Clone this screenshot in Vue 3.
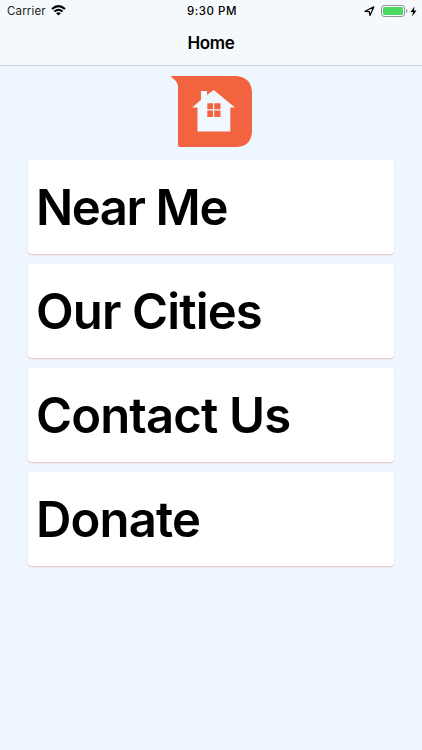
<script setup>
const items = [
  { label: 'Near Me', id: 'near' },
  { label: 'Our Cities', id: 'cities' },
  { label: 'Contact Us', id: 'contact' },
  { label: 'Donate', id: 'donate' },
]
</script>

<template>
  <div class="screen">
    <header class="header">
      <div class="status">
        <div class="left">
          <span class="carrier">Carrier</span>
          <svg class="wifi" width="15" height="11" viewBox="0 0 15 11">
            <g fill="none" stroke="#000" stroke-width="2">
              <path d="M1 4.1Q7.5 -1.9 14 4.1" />
              <path d="M3.4 6.6Q7.5 2.9 11.6 6.6" />
            </g>
            <path d="M5.1 8.2Q7.5 6.2 9.9 8.2L7.5 10.6Z" />
          </svg>
        </div>
        <span class="time">9:30 PM</span>
        <div class="right">
          <svg width="11" height="11" viewBox="0 0 11 11">
            <path d="M1 5.3L9.8 .9L5.9 9.5L5.3 5.7Z" fill="none" stroke="#000" stroke-width="1.2" stroke-linejoin="round" />
          </svg>
          <svg class="battery" width="27" height="12" viewBox="0 0 27 12">
            <rect x=".5" y=".5" width="23" height="11" rx="2.6" fill="#fff" stroke="#939598" />
            <rect x="2" y="2" width="20" height="8" rx="1.2" fill="#4cd964" />
            <path d="M25 4Q26.5 4.5 26.5 6T25 8Z" fill="#939598" />
          </svg>
          <svg class="bolt" width="7" height="11" viewBox="0 0 7 11">
            <path d="M4.6 .4L.5 6H3L2.1 10.4L6.5 4.5H3.9Z" />
          </svg>
        </div>
      </div>
      <h1 class="title">Home</h1>
    </header>
    <svg class="logo" width="84" height="74" viewBox="0 0 84 74">
      <path d="M2 1H66Q81 2 82 17V57Q81 71 67 72H10Q8 72 8 70V10Q6 5 1.3 2Q1 1 2 1Z" fill="#f26440" />
      <path d="M22.2 32.5L31 24.8V16H37V20L43.7 15L65 32.5H60.3V56.5H27.5V32.5Z" fill="#f0f7ff" />
      <path d="M37.3 28.2H43V34.2H37.3ZM44.2 28.2H50.5V34.2H44.2ZM37.3 35.5H43V42H37.3ZM44.2 35.5H50.5V42H44.2Z" fill="#f26440" />
    </svg>
    <nav class="menu">
      <div v-for="item in items" :key="item.id" class="card">
        <span class="label" :class="item.id">{{ item.label }}</span>
      </div>
    </nav>
  </div>
</template>

<style>
body {
  margin: 0;
}
</style>

<style scoped>
.screen {
  box-sizing: border-box;
  height: 750px;
  background: #eef7ff;
  font-family: Inter, "Liberation Sans", sans-serif;
  color: #000;
  display: flex;
  flex-direction: column;
  align-items: center;
}
.header {
  box-sizing: border-box;
  width: 100%;
  height: 66px;
  flex: none;
  background: #f6f9fb;
  border-bottom: 1px solid #cbd2d8;
}
.status {
  height: 22px;
  display: grid;
  grid-template-columns: 1fr auto 1fr;
  align-items: center;
  padding: 0 5px 0 7px;
  font-size: 11.5px;
  line-height: 22px;
}
.left,
.right {
  display: flex;
  align-items: center;
}
.left {
  gap: 5px;
}
.wifi {
  margin-top: -1px;
}
.carrier {
  color: #222;
  letter-spacing: 0.15px;
}
.right {
  justify-content: flex-end;
}
.battery {
  margin-left: 6px;
}
.bolt {
  margin-left: 2px;
}
.time {
  font-weight: 500;
  letter-spacing: 0.5px;
}
.title {
  margin: 0;
  text-align: center;
  font-size: 17px;
  font-weight: 600;
  line-height: 43px;
  letter-spacing: -0.4px;
}
.logo {
  margin-top: 9px;
  margin-left: 2px;
  flex: none;
}
.menu {
  width: 366px;
  margin-top: 11px;
  display: flex;
  flex-direction: column;
  gap: 10px;
}
.card {
  box-sizing: border-box;
  height: 94px;
  padding: 2px 0 0 8px;
  border-radius: 4px;
  background: #fff;
  box-shadow: 0 1px 1.5px rgba(225, 130, 125, 0.45);
  display: flex;
  align-items: center;
}
.label {
  font-size: 49px;
  font-weight: 600;
  line-height: 92px;
  white-space: nowrap;
  letter-spacing: -0.85px;
}
.near {
  letter-spacing: -1.4px;
}
</style>
